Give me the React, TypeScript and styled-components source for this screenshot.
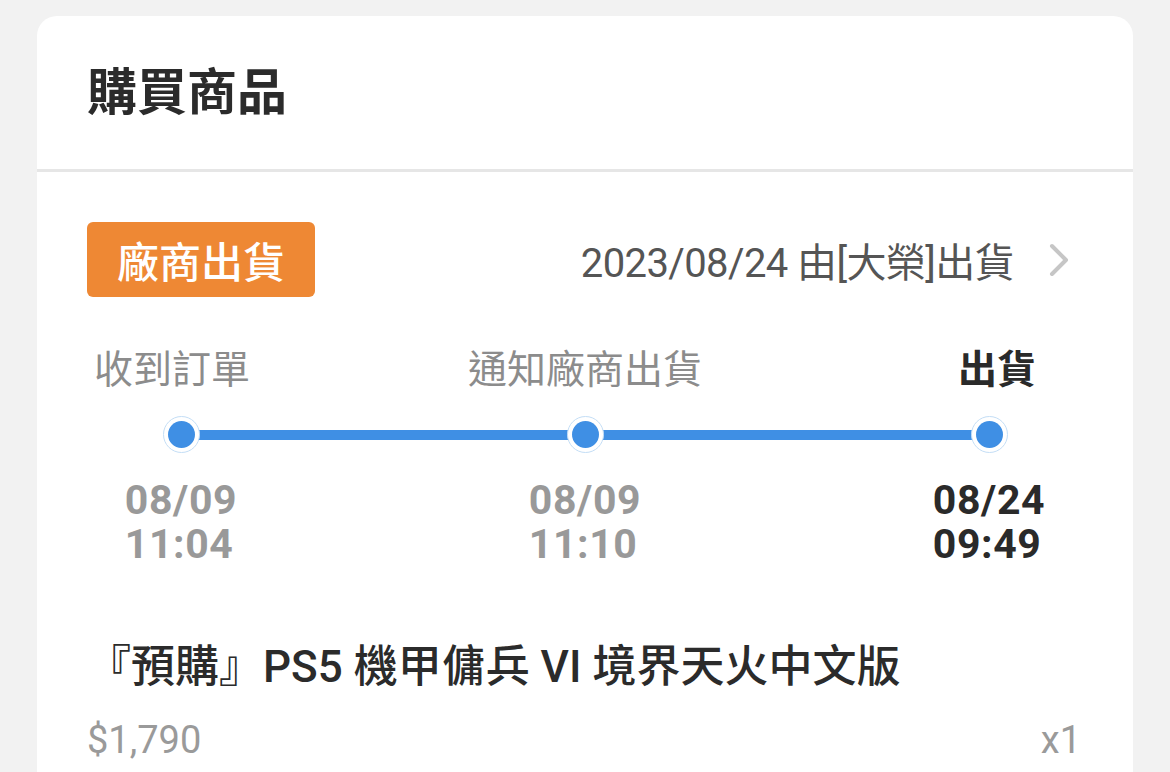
import React from "react";
import styled, { createGlobalStyle } from "styled-components";

const Global = createGlobalStyle`
  html, body { margin: 0; padding: 0; background: #f2f2f2; }
  body { font-family: Roboto, "Noto Sans CJK TC", sans-serif; }
  * { box-sizing: border-box; }
`;

const Page = styled.div`
  padding: 16px 37px 0 37px;
  height: 772px;
  overflow: hidden;
`;

const Card = styled.section`
  background: #fff;
  border-radius: 20px;
  min-height: 900px;
`;

const Header = styled.header`
  height: 156px;
  display: flex;
  align-items: center;
  padding: 0 50px 10px 50px;
  border-bottom: 3px solid #e6e6e6;
`;

const Title = styled.h1`
  margin: 0;
  font-size: 50px;
  font-weight: 700;
  color: #2b2b2b;
  letter-spacing: 0;
`;

const Body = styled.div`
  padding: 50px 50px 0 50px;
`;

const ShipRow = styled.div`
  display: flex;
  align-items: center;
  justify-content: space-between;
`;

const Badge = styled.span`
  display: inline-flex;
  align-items: center;
  justify-content: center;
  height: 75px;
  padding: 0 30px;
  border-radius: 6px;
  background: #ee8834;
  color: #fff;
  font-size: 42px;
  font-weight: 500;
`;

const ShipInfo = styled.div`
  display: flex;
  align-items: center;
  gap: 34px;
  color: #555;
  font-size: 40px;
  letter-spacing: -0.6px;
  padding-right: 13px;
`;

const Timeline = styled.div`
  position: relative;
  display: flex;
  justify-content: space-between;
  margin-top: 50px;
`;

const Step = styled.div`
  width: 188px;
  display: flex;
  flex-direction: column;
  align-items: center;
`;

const StepLabel = styled.div<{ $active?: boolean; $shift: number }>`
  font-size: 39px;
  line-height: 47px;
  white-space: nowrap;
  color: ${(p) => (p.$active ? "#2a2a2a" : "#8c8c8c")};
  font-weight: ${(p) => (p.$active ? 700 : 400)};
  transform: translateX(${(p) => p.$shift}px);
`;

const Track = styled.div`
  position: absolute;
  left: 94px;
  right: 94px;
  top: 83px;
  height: 10px;
  background: #3f8fe4;
`;

const Dot = styled.span`
  position: relative;
  z-index: 1;
  margin-top: 22px;
  width: 37px;
  height: 37px;
  border-radius: 50%;
  background: #fff;
  border: 1px solid #c4def6;
  display: flex;
  align-items: center;
  justify-content: center;
  &::after {
    content: "";
    width: 27px;
    height: 27px;
    border-radius: 50%;
    background: #3f8fe4;
  }
`;

const StepTime = styled.div<{ $active?: boolean }>`
  margin-top: 25px;
  font-size: 41px;
  line-height: 44px;
  font-weight: 700;
  letter-spacing: 0.6px;
  text-align: left;
  white-space: nowrap;
  color: ${(p) => (p.$active ? "#2a2a2a" : "#999999")};
`;

const ProductName = styled.div`
  margin-top: 74px;
  font-size: 44px;
  line-height: 55px;
  font-weight: 500;
  color: #2b2b2b;
`;

const PriceRow = styled.div`
  margin-top: 23px;
  display: flex;
  justify-content: space-between;
  align-items: center;
  font-size: 38px;
  color: #9a9a9a;
  padding-right: 2px;
`;

const Chevron = () => (
  <svg width="22" height="36" viewBox="0 0 22 36" fill="none">
    <path d="M4 4 L18 18 L4 32" stroke="#c6c6c6" strokeWidth="4" strokeLinecap="round" strokeLinejoin="round" />
  </svg>
);

const steps = [
  { label: "收到訂單", date: "08/09", time: "11:04", shift: -9, active: false },
  { label: "通知廠商出貨", date: "08/09", time: "11:10", shift: 0, active: false },
  { label: "出貨", date: "08/24", time: "09:49", shift: 8, active: true },
];

export default function App() {
  return (
    <>
      <Global />
      <Page>
        <Card>
          <Header>
            <Title>購買商品</Title>
          </Header>
          <Body>
            <ShipRow>
              <Badge>廠商出貨</Badge>
              <ShipInfo>
                <span>2023/08/24 由[大榮]出貨</span>
                <Chevron />
              </ShipInfo>
            </ShipRow>
            <Timeline>
              <Track />
              {steps.map((s) => (
                <Step key={s.label}>
                  <StepLabel $active={s.active} $shift={s.shift}>
                    {s.label}
                  </StepLabel>
                  <Dot />
                  <StepTime $active={s.active}>
                    {s.date}
                    <br />
                    {s.time}
                  </StepTime>
                </Step>
              ))}
            </Timeline>
            <ProductName>『預購』PS5 機甲傭兵 VI 境界天火中文版</ProductName>
            <PriceRow>
              <span>$1,790</span>
              <span>x1</span>
            </PriceRow>
          </Body>
        </Card>
      </Page>
    </>
  );
}
